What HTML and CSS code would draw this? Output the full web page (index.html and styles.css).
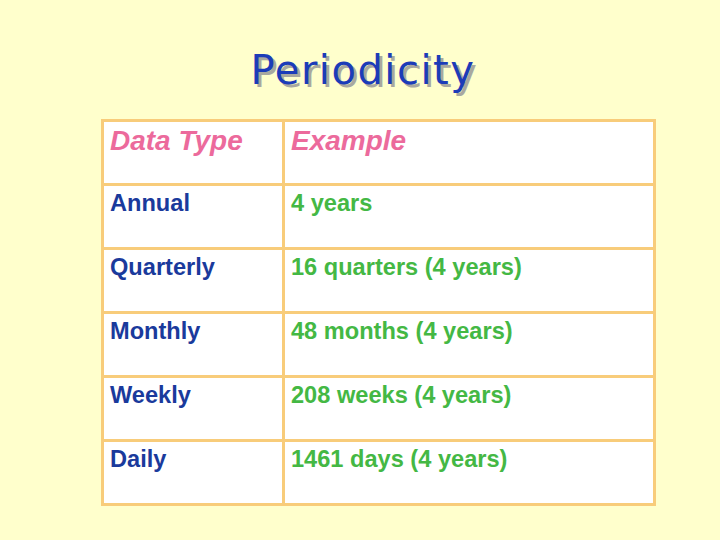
FILE: index.html
```html
<!DOCTYPE html>
<html>
<head>
<meta charset="utf-8">
<link rel="stylesheet" href="styles.css">
</head>
<body>
<div class="slide">
  <h1 class="title">Periodicity</h1>
  <table class="grid">
    <tr class="head"><td class="c1">Data Type</td><td class="c2">Example</td></tr>
    <tr><td class="c1">Annual</td><td class="c2">4 years</td></tr>
    <tr><td class="c1">Quarterly</td><td class="c2">16 quarters (4 years)</td></tr>
    <tr><td class="c1">Monthly</td><td class="c2">48 months (4 years)</td></tr>
    <tr><td class="c1">Weekly</td><td class="c2">208 weeks (4 years)</td></tr>
    <tr><td class="c1">Daily</td><td class="c2">1461 days (4 years)</td></tr>
  </table>
</div>
</body>
</html>
```
FILE: styles.css
```css
html, body {
  margin: 0;
  padding: 0;
  background: #ffffcc;
}
.slide {
  width: 720px;
  height: 540px;
  overflow: hidden;
  background: #ffffcc;
  font-family: "Liberation Sans", Arial, sans-serif;
}
.title {
  margin: 0;
  padding: 44px 0 0 6px;
  height: 119px;
  box-sizing: border-box;
  text-align: center;
  font-family: "DejaVu Sans", sans-serif;
  font-weight: normal;
  font-size: 40px;
  line-height: 52px;
  letter-spacing: 1.5px;
  color: #1c3cb8;
  text-shadow: 3px 3px 0 #a8a8a0;
}
.grid {
  margin-left: 101px;
  border-collapse: collapse;
  background: #ffffff;
  width: 555px;
}
.grid td {
  border: 3px solid #f8cc7a;
  height: 64px;
  padding: 2px 6px 0 6px;
  vertical-align: top;
  font-weight: bold;
  font-size: 23.6px;
  line-height: 30px;
  box-sizing: border-box;
}
.grid .c1 {
  width: 181px;
  color: #1a3a9c;
}
.grid .c2 {
  color: #44b844;
}
.grid .head td {
  font-style: italic;
  font-size: 28px;
  line-height: 34px;
  padding-top: 2px;
  color: #ec6a9c;
}
```
